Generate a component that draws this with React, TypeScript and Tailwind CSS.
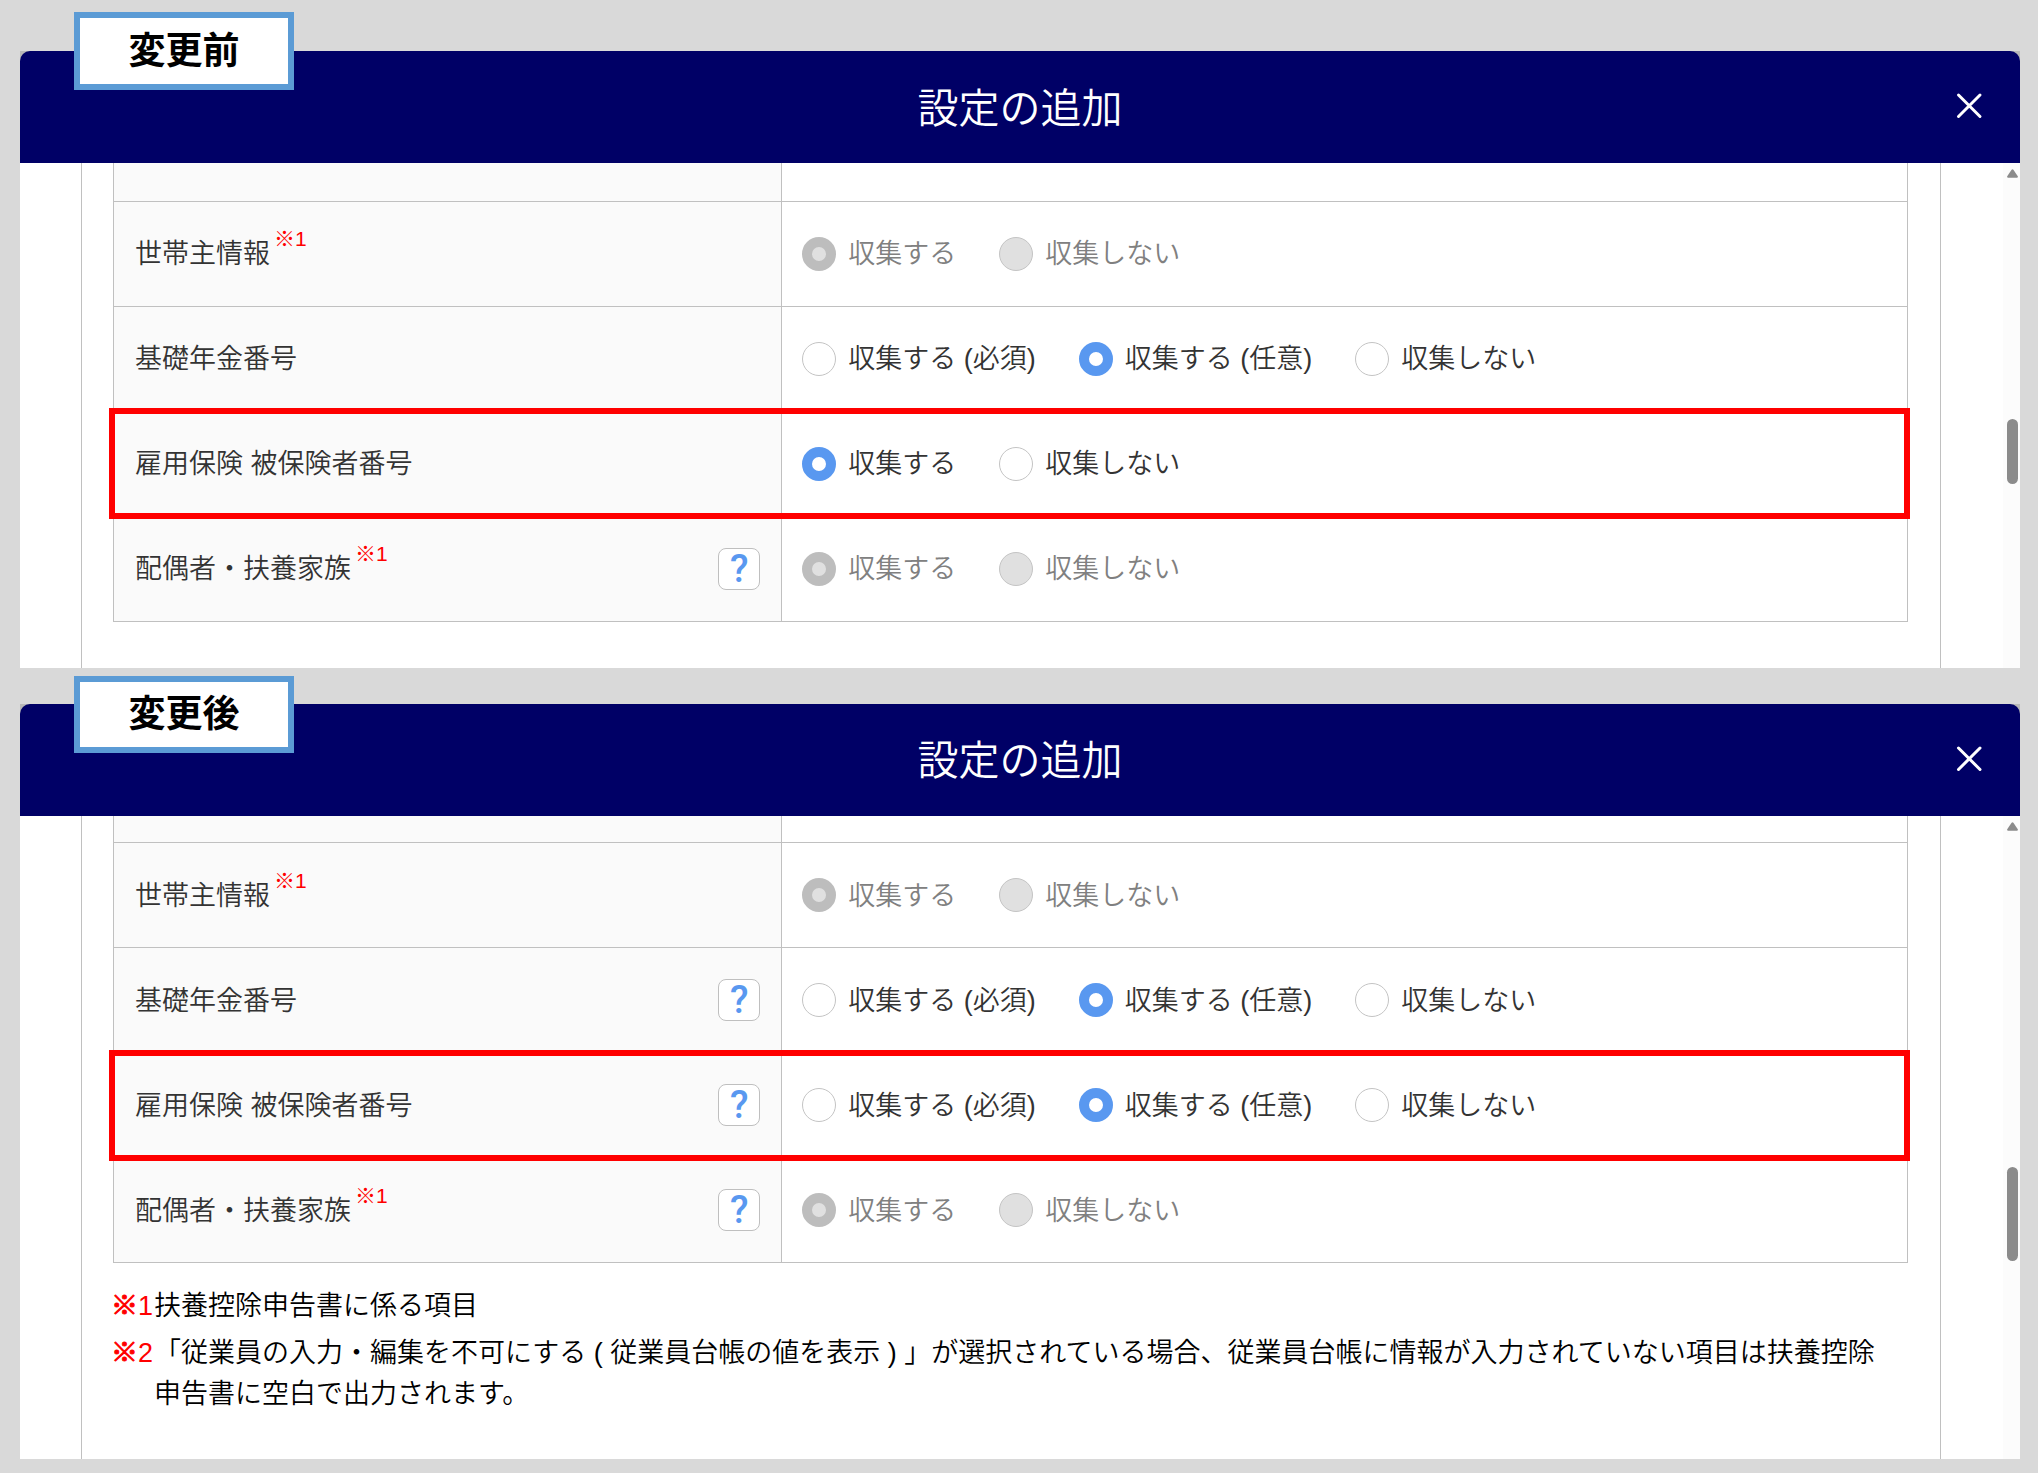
import React from "react";

type Choice = { label: string; checked?: boolean };

type Item = {
  id: string;
  title: string;
  mark?: string;
  help?: boolean;
  disabled?: boolean;
  highlighted?: boolean;
  choices: Choice[];
};

const twoChoices: Choice[] = [{ label: "収集する", checked: true }, { label: "収集しない" }];

const threeChoices: Choice[] = [
  { label: "収集する (必須)" },
  { label: "収集する (任意)", checked: true },
  { label: "収集しない" },
];

const beforeItems: Item[] = [
  { id: "before-head", title: "世帯主情報", mark: "※1", disabled: true, choices: twoChoices },
  { id: "before-pension", title: "基礎年金番号", choices: threeChoices },
  { id: "before-insurance", title: "雇用保険 被保険者番号", highlighted: true, choices: twoChoices },
  { id: "before-family", title: "配偶者・扶養家族", mark: "※1", help: true, disabled: true, choices: twoChoices },
];

const afterItems: Item[] = [
  { id: "after-head", title: "世帯主情報", mark: "※1", disabled: true, choices: twoChoices },
  { id: "after-pension", title: "基礎年金番号", help: true, choices: threeChoices },
  { id: "after-insurance", title: "雇用保険 被保険者番号", help: true, highlighted: true, choices: threeChoices },
  { id: "after-family", title: "配偶者・扶養家族", mark: "※1", help: true, disabled: true, choices: twoChoices },
];

function HelpButton({ title }: { title: string }) {
  return (
    <button
      type="button"
      aria-label={`${title}のヘルプ`}
      className="flex size-[42px] shrink-0 items-center justify-center rounded-lg border border-[#bfbfbf] bg-white font-[Roboto] text-[38px] leading-none font-medium text-[#5998f0]"
    >
      ?
    </button>
  );
}

function RadioChoice({ name, choice, disabled }: { name: string; choice: Choice; disabled?: boolean }) {
  return (
    <label className={disabled ? "flex items-center gap-3 text-[#808080]" : "flex items-center gap-3 text-[#333333]"}>
      <input
        type="radio"
        name={name}
        defaultChecked={choice.checked}
        disabled={disabled}
        className="size-[34px] shrink-0 appearance-none rounded-full border border-[#c4c4c4] bg-white checked:border-[10px] checked:border-[#5998f0] disabled:bg-[#e0e0e0] disabled:checked:border-[#bdbdbd]"
      />
      <span className="pt-0.5">{choice.label}</span>
    </label>
  );
}

function ItemRow({ item }: { item: Item }) {
  return (
    <tr className="relative h-[105px]">
      <th scope="row" className="border border-[#c0c0c0] bg-[#fafafa] px-[21px] text-left font-[350] text-[#333333]">
        <div className="flex items-center justify-between">
          <div className="flex items-center gap-1">
            <span className="pt-0.5">{item.title}</span>
            {item.mark && <sup className="top-0 -mt-[30px] text-[21px] leading-none text-[#ff0000]">{item.mark}</sup>}
          </div>
          {item.help && <HelpButton title={item.title} />}
        </div>
        {item.highlighted && (
          <div aria-hidden="true" className="pointer-events-none absolute -inset-y-[3px] -right-0.5 -left-[5px] z-10 border-[6px] border-[#ff0000]" />
        )}
      </th>
      <td className="border border-[#c0c0c0] px-5">
        <div role="radiogroup" aria-label={item.title} className="flex items-center gap-[43px]">
          {item.choices.map((choice) => (
            <RadioChoice key={choice.label} name={item.id} choice={choice} disabled={item.disabled} />
          ))}
        </div>
      </td>
    </tr>
  );
}

function Panel({
  badge,
  badgeClass,
  items,
  firstRowClass,
  thumbClass,
  contentClass,
  children,
}: {
  badge: string;
  badgeClass: string;
  items: Item[];
  firstRowClass: string;
  thumbClass: string;
  contentClass: string;
  children?: React.ReactNode;
}) {
  return (
    <section className="relative">
      <div className="bg-[#b8b8b8]">
        <header className="flex h-28 items-center rounded-t-[10px] bg-[#000066] pr-9 text-white">
          <div className="w-[66px]" />
          <h2 className="flex-1 pt-1 text-center text-[41px] leading-none">設定の追加</h2>
          <button type="button" aria-label="閉じる" className="flex size-[30px] items-center justify-center">
            <svg viewBox="0 0 30 30" className="size-[30px]" fill="none" stroke="currentColor" strokeWidth="3">
              <path d="M4.5 3 L26 24.5 M26 3 L4.5 24.5" strokeLinecap="round" />
            </svg>
          </button>
        </header>
      </div>
      <div className="flex bg-white">
        <div className="flex-1 pr-[62px] pl-[61px]">
          <div className={contentClass}>
            <table className="w-full table-fixed border-collapse">
              <colgroup>
                <col className="w-[37.25%]" />
                <col />
              </colgroup>
              <tbody>
                <tr className={firstRowClass}>
                  <td className="border border-t-0 border-[#c0c0c0] bg-[#fafafa]" />
                  <td className="border border-t-0 border-[#c0c0c0]" />
                </tr>
                {items.map((item) => (
                  <ItemRow key={item.id} item={item} />
                ))}
              </tbody>
            </table>
            {children}
          </div>
        </div>
        <div className="flex w-[17px] flex-col items-center bg-[#fcfcfc] pt-1.5 pr-0.5 pl-1">
          <svg viewBox="0 0 11 9" className="h-[9px] w-[11px]" fill="#8b8b8b">
            <path d="M4.6 0.8 Q5.5 -0.4 6.4 0.8 L10.8 7.2 Q11.2 8.8 9.8 8.8 H1.2 Q-0.2 8.8 0.2 7.2 Z" />
          </svg>
          <div className={thumbClass} />
        </div>
      </div>
      <div className={badgeClass}>{badge}</div>
    </section>
  );
}

function Note({ number, children }: { number: string; children: React.ReactNode }) {
  return (
    <li className="flex">
      <span className="w-[43px] shrink-0 text-[#ff0000]">
        <span className="font-bold [-webkit-text-stroke:1px]">※</span>
        {number}
      </span>
      <p className="flex-1 pr-4">{children}</p>
    </li>
  );
}

export default function App() {
  return (
    <main className="flex min-h-screen flex-col gap-9 bg-[#d9d9d9] pt-[51px] pr-[18px] pb-3.5 pl-5 font-['Liberation_Sans','Noto_Sans_CJK_JP',sans-serif] text-[27px] leading-[41px] font-[350]">
      <Panel
        badge="変更前"
        badgeClass="absolute -top-[39px] left-[54px] flex h-[78px] w-[220px] items-center justify-center border-[6px] border-[#5b9bd5] bg-white text-[37px] font-bold text-black"
        items={beforeItems}
        firstRowClass="h-[38px]"
        thumbClass="mt-[241px] h-[65px] w-[11px] rounded-full bg-[#8b8b8b]"
        contentClass="border-x border-[#c0c0c0] pr-8 pb-[46px] pl-[31px]"
      />
      <Panel
        badge="変更後"
        badgeClass="absolute -top-7 left-[54px] flex h-[77px] w-[220px] items-center justify-center border-[6px] border-[#5b9bd5] bg-white text-[37px] font-bold text-black"
        items={afterItems}
        firstRowClass="h-[27px]"
        thumbClass="mt-[336px] h-[94px] w-[11px] rounded-full bg-[#8b8b8b]"
        contentClass="border-x border-[#c0c0c0] pr-8 pb-11 pl-[31px]"
      >
        <ul className="mt-[23px] -ml-0.5 flex flex-col gap-1.5 text-black">
          <Note number="1">扶養控除申告書に係る項目</Note>
          <Note number="2">
            「従業員の入力・編集を不可にする ( 従業員台帳の値を表示 ) 」が選択されている場合、従業員台帳に情報が入力されていない項目は扶養控除申告書に空白で出力されます。
          </Note>
        </ul>
      </Panel>
    </main>
  );
}
